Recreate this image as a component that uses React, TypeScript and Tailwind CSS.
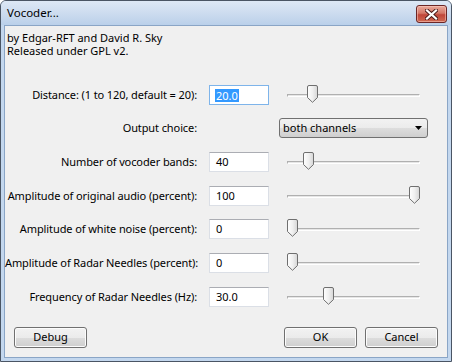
import React from "react";

const font = { fontFamily: '"Noto Sans", "Open Sans", sans-serif' };

function Thumb() {
  return (
    <svg width="11" height="18" viewBox="0 0 11 18" className="block">
      <defs>
        <linearGradient id="tg" x1="0" y1="0" x2="1" y2="0">
          <stop offset="0" stopColor="#ffffff" />
          <stop offset="0.5" stopColor="#f0f0f0" />
          <stop offset="1" stopColor="#d6d6d6" />
        </linearGradient>
      </defs>
      <path
        d="M2 0.5 H9 Q10.5 0.5 10.5 2 V12.5 L5.5 17.3 L0.5 12.5 V2 Q0.5 0.5 2 0.5 Z"
        fill="url(#tg)"
        stroke="#6f6f6f"
        strokeWidth="1"
      />
    </svg>
  );
}

function Slider({ pos }: { pos: number }) {
  return (
    <div className="relative w-[133px] h-[20px] flex items-center">
      <div className="w-full h-[3px] border-t border-t-[#b0b0b0] border-b border-b-[#ffffff] bg-[#e6e6e6] border-l border-l-[#b0b0b0] border-r border-r-[#ffffff]" />
      <div className="absolute top-0" style={{ left: pos }}>
        <Thumb />
      </div>
    </div>
  );
}

function TextBox({ value, focused }: { value: string; focused?: boolean }) {
  return (
    <div
      className={
        "w-[60px] h-[20px] bg-white flex items-center pl-[5px] text-[11px] text-black border " +
        (focused
          ? "border-[#7eb4ea]"
          : "border-[#dbdfe6] border-t-[#abadb3]")
      }
    >
      {focused ? (
        <span className="bg-[#3399ff] text-white leading-[13px] px-[1px]">{value}</span>
      ) : (
        <span className="px-[1px]">{value}</span>
      )}
    </div>
  );
}

function Row({
  label,
  value,
  pos,
  focused,
  mt,
}: {
  label: string;
  value: string;
  pos: number;
  focused?: boolean;
  mt: string;
}) {
  return (
    <div className={"flex items-center h-[20px] " + mt}>
      <div className="w-[192px] shrink-0 text-right text-[11px] tracking-[-0.1px] text-black whitespace-nowrap">{label}</div>
      <div className="ml-[12px] shrink-0">
        <TextBox value={value} focused={focused} />
      </div>
      <div className="ml-[18px] shrink-0">
        <Slider pos={pos} />
      </div>
    </div>
  );
}

function Button({ label }: { label: string }) {
  return (
    <div className="w-[73px] h-[21px] rounded-[3px] border border-[#707070] flex items-center justify-center text-[11px] text-black bg-[linear-gradient(to_bottom,#f2f2f2_0%,#ebebeb_50%,#dddddd_51%,#cfcfcf_100%)] shadow-[inset_0_0_0_1px_#fcfcfc]">
      {label}
    </div>
  );
}

export default function App() {
  return (
    <div className="w-[452px] h-[362px] bg-white" style={font}>
      <div className="w-[452px] h-[362px] flex flex-col border border-[#4a5564] rounded-t-[6px] bg-[#c3d7ee] overflow-hidden">
        <div className="h-[24px] shrink-0 flex items-center justify-between bg-[linear-gradient(to_bottom,#dde8f5_0%,#cddcef_50%,#bad0ea_100%)] pl-[6px] pr-[4px]">
          <span className="text-[11.5px] text-black">Vocoder...</span>
          <div className="w-[31px] h-[18px] mt-[2px] rounded-[3px] border border-[#6b2626] bg-[linear-gradient(to_bottom,#e9a99c_0%,#d47868_45%,#c0463a_55%,#cf6a52_100%)] flex items-center justify-center shadow-[inset_0_0_0_1px_rgba(255,210,200,0.5)]">
            <svg width="13" height="11" viewBox="0 0 13 11">
              <path
                d="M2 1.5 L6.5 5.5 L11 1.5 M2 9.5 L6.5 5.5 L11 9.5"
                stroke="#4a1a1a"
                strokeWidth="4"
                strokeLinecap="square"
                fill="none"
              />
              <path
                d="M2 1.5 L6.5 5.5 L11 1.5 M2 9.5 L6.5 5.5 L11 9.5"
                stroke="#ffffff"
                strokeWidth="2.2"
                strokeLinecap="square"
                fill="none"
              />
            </svg>
          </div>
        </div>
        <div className="flex-1 mx-[3px] mb-[3px] border border-[#8aa5c6] bg-[#f0f0f0] flex flex-col">
          <div className="pl-[2px] pt-[5px] text-[11px] leading-[13px] text-black">
            <div>by Edgar-RFT and David R. Sky</div>
            <div>Released under GPL v2.</div>
          </div>
          <Row mt="mt-[28px]" label="Distance: (1 to 120, default = 20):" value="20.0" pos={20} focused />
          <div className="flex items-center h-[20px] mt-[13px]">
            <div className="w-[192px] shrink-0 text-right text-[11px] tracking-[-0.1px] text-black">Output choice:</div>
            <div className="ml-[82px] shrink-0 w-[149px] h-[20px] rounded-[3px] border border-[#707070] bg-[linear-gradient(to_bottom,#f2f2f2_0%,#ebebeb_50%,#dddddd_51%,#cfcfcf_100%)] flex items-center justify-between pl-[3px] pr-[5px] text-[11px] text-black">
              <span>both channels</span>
              <svg width="7" height="4" viewBox="0 0 7 4">
                <path d="M0 0 H7 L3.5 4 Z" fill="#000" />
              </svg>
            </div>
          </div>
          <Row mt="mt-[14px]" label="Number of vocoder bands:" value="40" pos={16} />
          <Row mt="mt-[14px]" label="Amplitude of original audio (percent):" value="100" pos={122} />
          <Row mt="mt-[13px]" label="Amplitude of white noise (percent):" value="0" pos={0} />
          <Row mt="mt-[14px]" label="Amplitude of Radar Needles (percent):" value="0" pos={0} />
          <Row mt="mt-[14px]" label="Frequency of Radar Needles (Hz):" value="30.0" pos={36} />
          <div className="flex-1" />
          <div className="flex items-center px-[9px] pb-[9px]">
            <Button label="Debug" />
            <div className="flex-1" />
            <Button label="OK" />
            <div className="w-[8px]" />
            <Button label="Cancel" />
          </div>
        </div>
      </div>
    </div>
  );
}
